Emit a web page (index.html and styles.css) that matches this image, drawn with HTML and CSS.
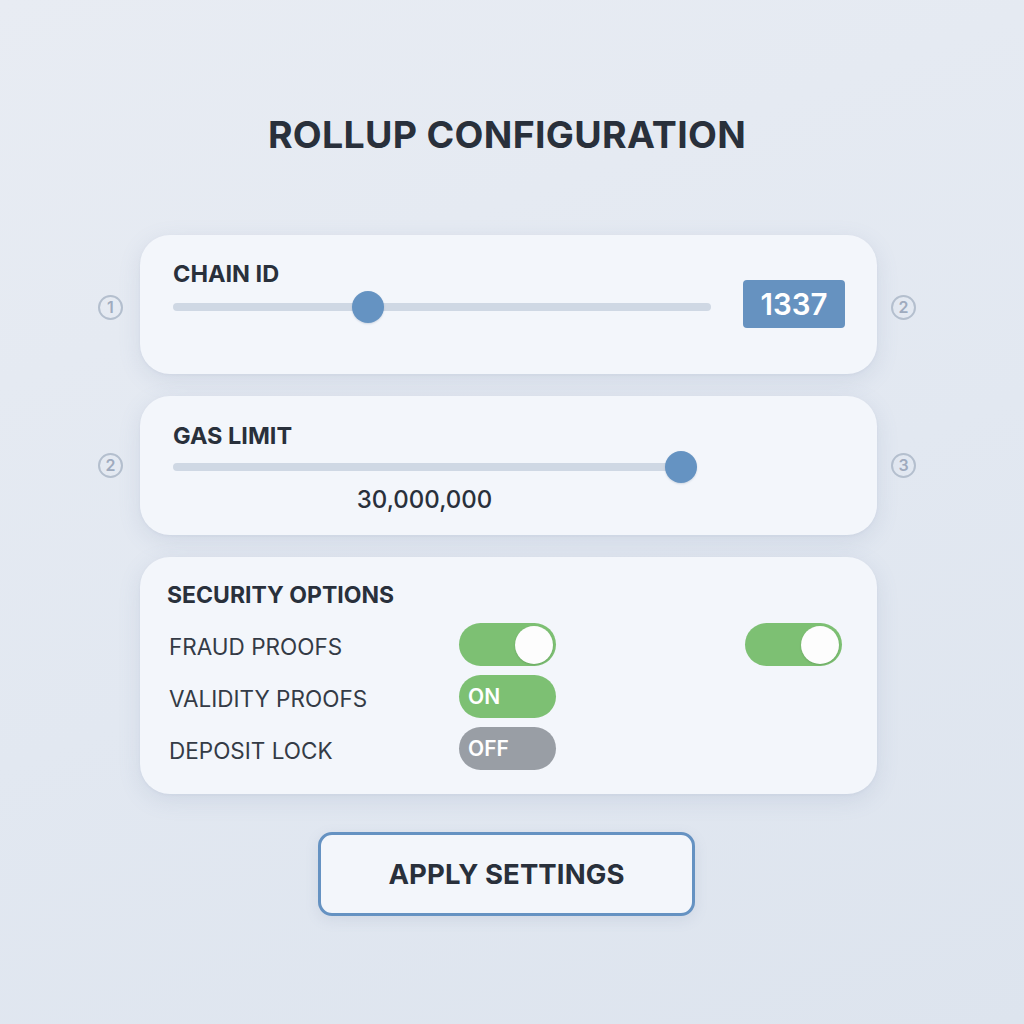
FILE: index.html
```html
<!DOCTYPE html>
<html lang="en">
<head>
<meta charset="utf-8">
<title>Rollup Configuration</title>
<link rel="stylesheet" href="styles.css">
</head>
<body>
<main class="page">
  <h1 class="title">ROLLUP CONFIGURATION</h1>

  <div class="rows">
    <div class="row row-chain">
      <div class="side side-left"><span class="circ">1</span></div>
      <section class="card card-chain">
        <div class="label">CHAIN ID</div>
        <div class="slider slider-chain">
          <div class="track"></div>
          <div class="thumb" style="left: 179px"></div>
        </div>
        <div class="value-box">1337</div>
      </section>
      <div class="side side-right"><span class="circ">2</span></div>
    </div>

    <div class="row">
      <div class="side side-left"><span class="circ">2</span></div>
      <section class="card card-gas">
        <div class="label">GAS LIMIT</div>
        <div class="slider slider-gas">
          <div class="track"></div>
          <div class="thumb" style="left: 492px"></div>
        </div>
        <div class="gas-value">30,000,000</div>
      </section>
      <div class="side side-right"><span class="circ">3</span></div>
    </div>

    <div class="row">
      <div class="side side-left"></div>
      <section class="card card-security">
        <div class="label label-security">SECURITY OPTIONS</div>
        <div class="options">
          <div class="opt-label">FRAUD PROOFS</div>
          <div class="toggle toggle-on toggle-knob"><span class="knob"></span></div>
          <div class="toggle toggle-on toggle-knob toggle-extra"><span class="knob"></span></div>

          <div class="opt-label">VALIDITY PROOFS</div>
          <div class="toggle toggle-on"><span class="toggle-text">ON</span></div>
          <div></div>

          <div class="opt-label">DEPOSIT LOCK</div>
          <div class="toggle toggle-off"><span class="toggle-text">OFF</span></div>
          <div></div>
        </div>
      </section>
      <div class="side side-right"></div>
    </div>
  </div>

  <div class="actions">
    <button class="apply">APPLY SETTINGS</button>
  </div>
</main>
</body>
</html>
```

FILE: styles.css
```css
* { box-sizing: border-box; }

html, body {
  margin: 0;
  padding: 0;
}

body {
  width: 1024px;
  height: 1024px;
  background: linear-gradient(160deg, #e8ecf3 0%, #e2e8f1 55%, #dde4ee 100%);
  font-family: Inter, "Noto Sans", "Liberation Sans", sans-serif;
  color: #29303b;
}

.page {
  display: flex;
  flex-direction: column;
  padding-top: 113px;
}

.title {
  margin: 0;
  padding-right: 10px;
  text-align: center;
  font-size: 37.5px;
  line-height: 44px;
  font-weight: 700;
  letter-spacing: 0.3px;
  color: #29303b;
}

.rows {
  display: flex;
  flex-direction: column;
  gap: 22px;
  margin-top: 78px;
}

.row {
  display: grid;
  grid-template-columns: 140px 737px 1fr;
  align-items: center;
}

.side {
  display: flex;
  align-items: center;
}
.side-left { justify-content: flex-end; padding-right: 17px; }
.side-right { justify-content: flex-start; padding-left: 14px; }
.row-chain .side { padding-top: 5px; }

.circ {
  width: 25px;
  height: 25px;
  border-radius: 50%;
  border: 2px solid #b4bfce;
  color: #9fabbe;
  font-size: 16px;
  line-height: 21px;
  font-weight: 600;
  text-align: center;
}

.card {
  background: #f3f6fb;
  border-radius: 30px;
  box-shadow: 0 6px 22px rgba(110, 130, 165, 0.16), 0 1px 3px rgba(110, 130, 165, 0.08);
}

.label {
  font-size: 23.5px;
  line-height: 26px;
  font-weight: 700;
  color: #29303b;
}

.slider {
  position: relative;
  height: 32px;
}
.track {
  position: absolute;
  left: 0;
  right: 0;
  top: 12px;
  height: 8px;
  border-radius: 4px;
  background: #cfd8e4;
}
.thumb {
  position: absolute;
  top: 0;
  width: 32px;
  height: 32px;
  border-radius: 50%;
  background: #6593c2;
  box-shadow: 0 1px 2px rgba(60, 90, 130, 0.2);
}

/* Chain ID card */
.card-chain {
  height: 139px;
  display: grid;
  grid-template-columns: 538px 102px;
  grid-template-rows: 26px 32px;
  column-gap: 32px;
  row-gap: 4px;
  padding: 26px 32px 0 33px;
}
.card-chain .label { grid-column: 1; grid-row: 1; }
.card-chain .slider { grid-column: 1; grid-row: 2; }
.value-box {
  grid-column: 2;
  grid-row: 1 / span 2;
  align-self: start;
  margin-top: 19px;
  width: 102px;
  height: 48px;
  border-radius: 4px;
  background: #6692c0;
  color: #ffffff;
  font-size: 29.5px;
  font-weight: 600;
  line-height: 48px;
  text-align: center;
}

/* Gas limit card */
.card-gas {
  height: 139px;
  padding: 27px 0 0 33px;
  display: flex;
  flex-direction: column;
  gap: 2px;
}
.slider-gas { width: 517px; }
.gas-value {
  width: 517px;
  padding-top: 2px;
  padding-right: 14px;
  text-align: center;
  font-size: 24px;
  line-height: 26px;
  font-weight: 500;
  color: #29303b;
}

/* Security card */
.card-security {
  height: 237px;
  padding: 25px 35px 0 27px;
}
.label-security { font-size: 23px; }
.options {
  margin-top: 15px;
  display: grid;
  grid-template-columns: 292px 97px 1fr;
  grid-auto-rows: 43px;
  row-gap: 9px;
  align-items: center;
}
.opt-label {
  font-size: 22.5px;
  font-weight: 400;
  color: #343b46;
  padding-left: 2px;
  padding-top: 3px;
}
.toggle {
  width: 97px;
  height: 43px;
  border-radius: 22px;
  display: flex;
  align-items: center;
  padding: 0 3px 0 9px;
}
.toggle-on { background: #7dc073; }
.toggle-off { background: #999ea5; }
.toggle-knob { justify-content: flex-end; }
.toggle-extra { justify-self: end; }
.knob {
  width: 38px;
  height: 38px;
  border-radius: 50%;
  background: #fdfdfd;
  box-shadow: 0 1px 2px rgba(40, 70, 40, 0.2);
}
.toggle-text {
  color: #ffffff;
  font-size: 21px;
  font-weight: 600;
}

.actions {
  display: flex;
  justify-content: center;
  margin-top: 38px;
  padding-right: 11px;
}
.apply {
  width: 377px;
  height: 84px;
  border: 3px solid #6592c2;
  border-radius: 14px;
  background: #f3f6fb;
  font-family: Inter, "Noto Sans", "Liberation Sans", sans-serif;
  font-size: 27.5px;
  font-weight: 700;
  color: #29303b;
  letter-spacing: 0.1px;
  box-shadow: 0 4px 14px rgba(110, 130, 165, 0.14);
}
```
